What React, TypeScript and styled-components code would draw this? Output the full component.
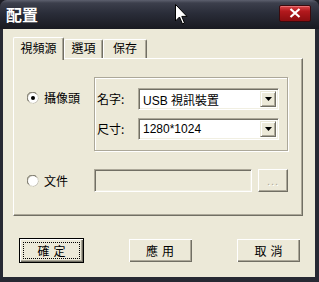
import React from "react"
import styled, { createGlobalStyle } from "styled-components"

const face = "#ECE9D8"
const light = "#FFFFFF"
const shadow = "#ACA899"
const dark = "#716F64"
const cjk = `"Noto Sans CJK TC", "Noto Sans CJK SC", sans-serif`
const mixed = `"Liberation Sans", "Noto Sans CJK TC", sans-serif`

const Global = createGlobalStyle`
  html, body {
    margin: 0;
    padding: 0;
    background: #1c1d24;
  }
`

const Window = styled.div`
  position: relative;
  width: 319px;
  height: 282px;
  display: flex;
  flex-direction: column;
  background: #272933;
  border-radius: 7px 7px 0 0;
  overflow: hidden;
  font-family: ${cjk};
  font-size: 12px;
  color: #000;
`

const TitleBar = styled.div`
  height: 29px;
  flex: none;
  display: flex;
  align-items: center;
  justify-content: space-between;
  padding: 0 8px 0 6px;
  background: linear-gradient(#5d606e 0, #3c3f4c 3px, #2a2d39 45%, #191a21 100%);
`

const Title = styled.div`
  color: #fff;
  font-weight: 700;
  font-size: 16px;
  letter-spacing: 0;
  line-height: 16px;
  margin-top: -2px;
`

const CloseBtn = styled.div`
  width: 30px;
  height: 15px;
  margin-top: -3px;
  border: 1px solid #3a0b0e;
  border-radius: 2px;
  background: linear-gradient(#d8474a 0, #b3191d 35%, #8c0d10 100%);
  box-shadow: inset 0 1px 0 #e77073;
  display: flex;
  align-items: center;
  justify-content: center;
`

const Client = styled.div`
  flex: 1;
  margin: 0 4px 5px 3px;
  background: ${face};
  display: flex;
  flex-direction: column;
`

const TabStrip = styled.div`
  display: flex;
  align-items: flex-end;
  padding: 8px 0 0 10px;
  height: 21px;
`

const Tab = styled.div<{ $active?: boolean; $w: number }>`
  position: relative;
  z-index: ${(p) => (p.$active ? 2 : 1)};
  box-sizing: border-box;
  width: ${(p) => p.$w}px;
  height: ${(p) => (p.$active ? 23 : 19)}px;
  margin-bottom: ${(p) => (p.$active ? -2 : 0)}px;
  background: ${face};
  border-top: 1px solid ${light};
  border-left: 1px solid ${light};
  border-right: 1px solid ${dark};
  box-shadow: inset -1px 0 0 ${shadow};
  border-radius: 2px 2px 0 0;
  display: flex;
  justify-content: center;
  padding-top: ${(p) => (p.$active ? 3 : 1)}px;
  line-height: 14px;
`

const Panel = styled.div`
  box-sizing: border-box;
  width: 290px;
  height: 158px;
  margin-left: 10px;
  border-top: 1px solid ${light};
  border-left: 1px solid ${light};
  border-right: 1px solid ${dark};
  border-bottom: 1px solid ${dark};
  box-shadow: inset -1px -1px 0 ${shadow};
  padding: 18px 0 0 13px;
`

const Row = styled.div<{ $top?: number }>`
  display: grid;
  grid-template-columns: 67px auto;
  margin-top: ${(p) => p.$top ?? 0}px;
`

const RadioCell = styled.label<{ $pad?: number }>`
  display: flex;
  align-items: center;
  gap: 5px;
  padding-top: ${(p) => p.$pad ?? 0}px;
  height: 14px;
  line-height: 14px;
  align-self: ${(p) => (p.$pad ? "start" : "center")};
`

const GroupBox = styled.div`
  box-sizing: border-box;
  width: 194px;
  height: 74px;
  border: 1px solid ${shadow};
  box-shadow: inset 1px 1px 0 ${light}, 1px 1px 0 ${light};
  padding: 10px 0 0 2px;
  display: flex;
  flex-direction: column;
  gap: 8px;
`

const FieldRow = styled.div`
  display: grid;
  grid-template-columns: 41px 141px;
  align-items: center;
`

const Label = styled.span`
  line-height: 14px;
`

const Combo = styled.div`
  box-sizing: border-box;
  height: 22px;
  background: #fff;
  border-top: 1px solid ${shadow};
  border-left: 1px solid ${shadow};
  border-right: 1px solid ${light};
  border-bottom: 1px solid ${light};
  box-shadow: inset 1px 1px 0 ${dark}, inset -1px -1px 0 #f1efe2;
  display: flex;
  align-items: center;
  padding: 2px 2px 2px 4px;
  font-family: ${mixed};
  font-size: 12px;
`

const ComboText = styled.span`
  flex: 1;
  color: #000;
`

const ArrowBtn = styled.div`
  box-sizing: border-box;
  width: 16px;
  height: 16px;
  background: ${face};
  border-top: 1px solid ${face};
  border-left: 1px solid ${face};
  border-right: 1px solid ${dark};
  border-bottom: 1px solid ${dark};
  box-shadow: inset 1px 1px 0 ${light}, inset -1px -1px 0 ${shadow};
  display: flex;
  align-items: center;
  justify-content: center;
`

const FileCells = styled.div`
  display: flex;
  gap: 6px;
`

const TextBox = styled.div`
  box-sizing: border-box;
  width: 158px;
  height: 23px;
  background: ${face};
  border-top: 1px solid ${shadow};
  border-left: 1px solid ${shadow};
  border-right: 1px solid ${light};
  border-bottom: 1px solid ${light};
  box-shadow: inset 1px 1px 0 ${dark}, inset -1px -1px 0 #f1efe2;
`

const SmallBtn = styled.div`
  box-sizing: border-box;
  width: 30px;
  height: 23px;
  background: ${face};
  border-top: 1px solid ${light};
  border-left: 1px solid ${light};
  border-right: 1px solid ${dark};
  border-bottom: 1px solid ${dark};
  box-shadow: inset -1px -1px 0 ${shadow};
  color: ${shadow};
  text-shadow: 1px 1px 0 ${light};
  font-family: "Liberation Sans", sans-serif;
  font-size: 11px;
  display: flex;
  align-items: center;
  justify-content: center;
  letter-spacing: 1px;
`

const ButtonBar = styled.div`
  display: flex;
  justify-content: space-between;
  padding: 22px 14px 0 16px;
`

const Button = styled.div<{ $default?: boolean }>`
  position: relative;
  box-sizing: border-box;
  width: 65px;
  height: 25px;
  background: ${face};
  border: 1px solid ${(p) => (p.$default ? "#000" : face)};
  box-shadow: inset 1px 1px 0 ${light}, inset -1px -1px 0 ${dark}, inset -2px -2px 0 ${shadow};
  display: flex;
  align-items: center;
  justify-content: center;
  letter-spacing: 4px;
  padding-left: 4px;
  line-height: 14px;
`

const FocusRing = styled.div`
  position: absolute;
  inset: 3px 3px 3px 3px;
  border: 1px dotted #000;
`

const Cursor = styled.svg`
  position: absolute;
  left: 175px;
  top: 4px;
`

const Radio: React.FC<{ checked?: boolean }> = ({ checked }) => (
  <svg width="12" height="12" viewBox="0 0 12 12">
    <circle cx="6" cy="6" r="5.5" fill="#fff" stroke={shadow} />
    <path d="M1.6 9.2 A5 5 0 0 1 9.2 1.6" fill="none" stroke={dark} strokeWidth="1" />
    <path d="M10.4 2.8 A5 5 0 0 1 2.8 10.4" fill="none" stroke="#f1efe2" strokeWidth="1" />
    {checked && <circle cx="6" cy="6" r="2" fill="#000" />}
  </svg>
)

const Arrow = () => (
  <svg width="7" height="4" viewBox="0 0 7 4">
    <path d="M0 0h7L3.5 4z" fill="#000" />
  </svg>
)

const App: React.FC = () => (
  <>
    <Global />
    <Window>
      <TitleBar>
        <Title>配置</Title>
        <CloseBtn>
          <svg width="12" height="10" viewBox="0 0 12 10">
            <path d="M1.5 1 L10.5 9 M10.5 1 L1.5 9" stroke="#fff" strokeWidth="2.2" />
          </svg>
        </CloseBtn>
      </TitleBar>
      <Client>
        <TabStrip>
          <Tab $active $w={51}>視頻源</Tab>
          <Tab $w={39}>選項</Tab>
          <Tab $w={44}>保存</Tab>
        </TabStrip>
        <Panel>
          <Row>
            <RadioCell $pad={14}>
              <Radio checked />
              攝像頭
            </RadioCell>
            <GroupBox>
              <FieldRow>
                <Label>名字:</Label>
                <Combo>
                  <ComboText>USB 視訊裝置</ComboText>
                  <ArrowBtn>
                    <Arrow />
                  </ArrowBtn>
                </Combo>
              </FieldRow>
              <FieldRow>
                <Label>尺寸:</Label>
                <Combo>
                  <ComboText>1280*1024</ComboText>
                  <ArrowBtn>
                    <Arrow />
                  </ArrowBtn>
                </Combo>
              </FieldRow>
            </GroupBox>
          </Row>
          <Row $top={18}>
            <RadioCell>
              <Radio />
              文件
            </RadioCell>
            <FileCells>
              <TextBox />
              <SmallBtn>...</SmallBtn>
            </FileCells>
          </Row>
        </Panel>
        <ButtonBar>
          <Button $default>
            確定
            <FocusRing />
          </Button>
          <Button>應用</Button>
          <Button>取消</Button>
        </ButtonBar>
      </Client>
      <Cursor width="13" height="21" viewBox="0 0 13 21">
        <path d="M0.5 0.5 V17 L4.5 13 L7.5 20 L9.5 19 L6.8 12.4 H12 Z" fill="#fff" stroke="#000" strokeWidth="1" strokeLinejoin="miter" />
      </Cursor>
    </Window>
  </>
)

export default App
